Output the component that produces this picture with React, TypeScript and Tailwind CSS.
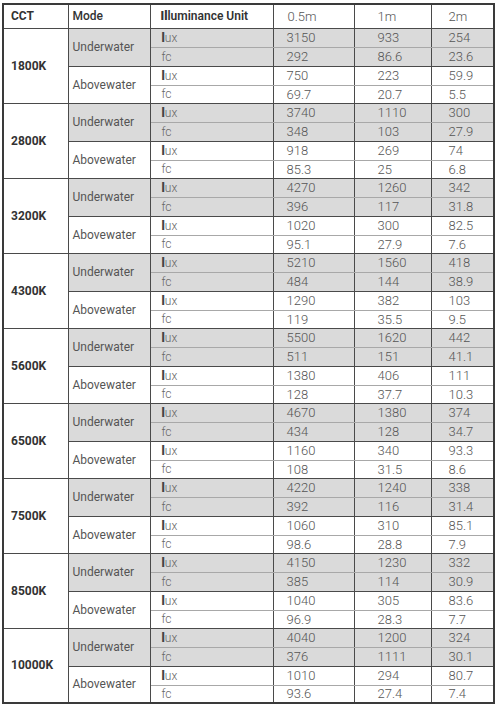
import React from "react";

type Block = { cct: string; rows: string[][] };

const blocks: Block[] = [
  { cct: "1800K", rows: [["3150", "933", "254"], ["292", "86.6", "23.6"], ["750", "223", "59.9"], ["69.7", "20.7", "5.5"]] },
  { cct: "2800K", rows: [["3740", "1110", "300"], ["348", "103", "27.9"], ["918", "269", "74"], ["85.3", "25", "6.8"]] },
  { cct: "3200K", rows: [["4270", "1260", "342"], ["396", "117", "31.8"], ["1020", "300", "82.5"], ["95.1", "27.9", "7.6"]] },
  { cct: "4300K", rows: [["5210", "1560", "418"], ["484", "144", "38.9"], ["1290", "382", "103"], ["119", "35.5", "9.5"]] },
  { cct: "5600K", rows: [["5500", "1620", "442"], ["511", "151", "41.1"], ["1380", "406", "111"], ["128", "37.7", "10.3"]] },
  { cct: "6500K", rows: [["4670", "1380", "374"], ["434", "128", "34.7"], ["1160", "340", "93.3"], ["108", "31.5", "8.6"]] },
  { cct: "7500K", rows: [["4220", "1240", "338"], ["392", "116", "31.4"], ["1060", "310", "85.1"], ["98.6", "28.8", "7.9"]] },
  { cct: "8500K", rows: [["4150", "1230", "332"], ["385", "114", "30.9"], ["1040", "305", "83.6"], ["96.9", "28.3", "7.7"]] },
  { cct: "10000K", rows: [["4040", "1200", "324"], ["376", "1111", "30.1"], ["1010", "294", "80.7"], ["93.6", "27.4", "7.4"]] },
];

const line = "border border-[#4a4a4a]";
const valuePad = ["pl-[13px]", "pl-[23px]", "pl-[17px]"];

const Lux = () => (
  <>
    <span className="font-black text-[#444]">l</span>ux
  </>
);

export default function App() {
  return (
    <div className="bg-white pt-[3px] pl-[2px] w-[496px] h-[708px]" style={{ fontFamily: "Roboto, 'Liberation Sans', sans-serif" }}>
      <table className="border-collapse table-fixed border-2 border-[#3a3a3a] w-[491px]">
        <colgroup>
          <col className="w-[65px]" />
          <col className="w-[82px]" />
          <col className="w-[123px]" />
          <col className="w-[81px]" />
          <col className="w-[77px]" />
          <col className="w-[63px]" />
        </colgroup>
        <thead>
          <tr className="h-[24px] text-[12px] text-[#333]">
            <th className={`${line} text-left font-bold pl-[7px]`}>CCT</th>
            <th className={`${line} text-left font-medium pl-[4px]`}>Mode</th>
            <th className={`${line} text-left font-semibold pl-[10px]`}>
              <span className="font-black">Il</span>luminance Unit
            </th>
            <th className={`${line} text-left font-light text-[13px] text-[#555] pl-[14px]`}>0.5m</th>
            <th className={`${line} text-left font-light text-[13px] text-[#555] pl-[23px]`}>1m</th>
            <th className={`${line} text-left font-light text-[13px] text-[#555] pl-[17px]`}>2m</th>
          </tr>
        </thead>
        <tbody>
          {blocks.map((b) =>
            b.rows.map((r, i) => {
              const under = i < 2;
              const shade = under ? "bg-[#dadada]" : "bg-white";
              const sub = i % 2 === 0 ? "border-b-[#a8a8a8]" : "";
              return (
                <tr key={b.cct + i} className={i === 3 ? "h-[18px]" : "h-[19px]"}>
                  {i === 0 && (
                    <td rowSpan={4} className={`${line} bg-white text-[12px] font-bold text-[#333] pl-[7px]`}>
                      {b.cct}
                    </td>
                  )}
                  {i % 2 === 0 && (
                    <td rowSpan={2} className={`${line} ${shade} text-[12px] text-[#555] pl-[4px]`}>
                      {under ? "Underwater" : "Abovewater"}
                    </td>
                  )}
                  <td className={`${line} ${sub} ${shade} text-[12px] text-[#666] font-light pl-[11px] leading-none`}>
                    {i % 2 === 0 ? <Lux /> : "fc"}
                  </td>
                  {r.map((v, j) => (
                    <td key={j} className={`${line} ${sub} ${shade} text-[13px] text-[#555] font-light leading-none ${valuePad[j]}`}>
                      {v}
                    </td>
                  ))}
                </tr>
              );
            })
          )}
        </tbody>
      </table>
    </div>
  );
}
